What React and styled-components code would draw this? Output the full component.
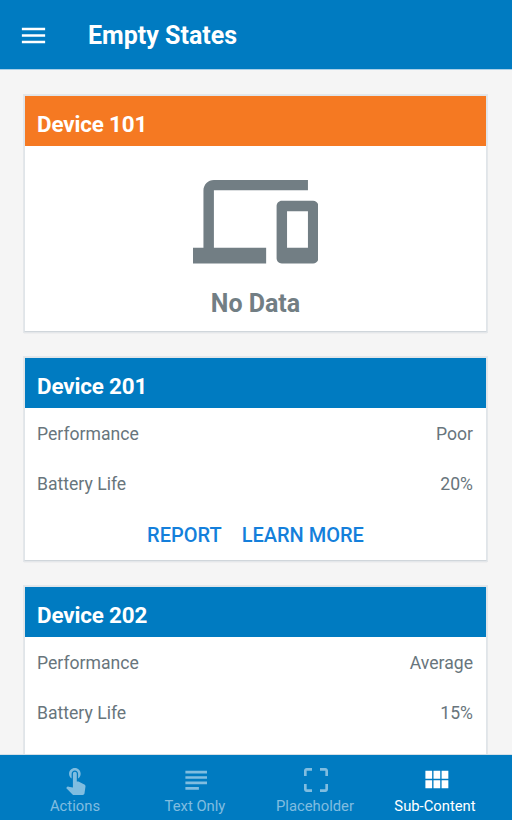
import React from 'react';
import styled, { createGlobalStyle } from 'styled-components';

const GlobalStyle = createGlobalStyle`
  * { box-sizing: border-box; }
  html, body { margin: 0; overflow: hidden; }
  body { font-family: Roboto, "Liberation Sans", sans-serif; background: #f5f5f5; }
`;

const Screen = styled.div`
  width: 512px;
  height: 820px;
  display: flex;
  flex-direction: column;
  overflow: hidden;
  background: #f5f5f5;
`;

const AppBar = styled.header`
  height: 69px;
  flex: none;
  display: flex;
  align-items: center;
  padding: 1px 18px 0;
  background: #007bc1;
  color: #fff;
  box-shadow: 0 1px 0 #a9d0e8;
`;

const MenuButton = styled.button`
  display: flex;
  padding: 0;
  margin-right: 39px;
  border: 0;
  background: none;
  color: inherit;
`;

const Title = styled.h1`
  margin: 0;
  padding-top: 1px;
  font-size: 25px;
  line-height: 30px;
  font-weight: 700;
`;

const Content = styled.main`
  flex: 1;
  min-height: 0;
  display: flex;
  flex-direction: column;
  gap: 25px;
  padding: 26px 25px 0 24px;
  overflow: hidden;
`;

const Card = styled.section`
  flex: none;
  height: ${(p) => p.$height}px;
  border: 1px solid #e0e5e9;
  border-bottom-color: #d0d6db;
  box-shadow: 0 0 0 1px #e4e7ea, 0 1px 1px #cdd0d3;
  background: #fff;
`;

const CardHeader = styled.h2`
  height: 50px;
  margin: 0;
  padding: 4px 12px 0;
  line-height: 49px;
  font-size: 22.4px;
  letter-spacing: -0.15px;
  font-weight: 700;
  color: #fff;
  background: ${(p) => p.$color};
`;

const InfoRow = styled.div`
  height: 50px;
  display: flex;
  align-items: center;
  justify-content: space-between;
  padding: 1px 13px 0 12px;
  font-size: 17.6px;
  color: #68757c;
`;

const CardActions = styled.div`
  display: flex;
  justify-content: center;
  gap: 20px;
  padding-top: 13px;
`;

const ActionButton = styled.button`
  padding: 0;
  border: 0;
  background: none;
  font: 500 20px/28px Roboto, sans-serif;
  color: #147fdb;
`;

const EmptyState = styled.div`
  display: flex;
  flex-direction: column;
  align-items: center;
  padding-top: 13px;
  color: #727e84;
`;

const EmptyLabel = styled.p`
  margin: 5px 0 0;
  font-size: 25px;
  line-height: 30px;
  font-weight: 700;
`;

const TabBar = styled.nav`
  flex: none;
  height: 65px;
  display: flex;
  padding: 9px 17px 0 15px;
  background: #007bc1;
  box-shadow: 0 -1px 0 #d5e0e7;
  z-index: 1;
`;

const Tab = styled.button`
  width: 120px;
  display: flex;
  flex-direction: column;
  align-items: center;
  padding: 0;
  border: 0;
  background: none;
  font: 400 14.8px/20px Roboto, sans-serif;
  color: ${(p) => (p.$active ? '#fff' : '#80bde0')};
`;

const IconSlot = styled.span`
  height: 32px;
  display: flex;
  justify-content: center;
  padding-left: ${(p) => p.$shift}px;
`;

const Glyph = styled.svg`
  display: block;
  flex: none;
  fill: currentColor;
`;

const paths = {
  menu: 'M3 18h18v-2H3v2zm0-5h18v-2H3v2zm0-7v2h18V6H3z',
  devices:
    'M4 6h18V4H4c-1.1 0-2 .9-2 2v11H0v3h14v-3H4V6zm19 2h-6c-.55 0-1 .45-1 1v10c0 .55.45 1 1 1h6c.55 0 1-.45 1-1V9c0-.55-.45-1-1-1zm-1 9h-4v-7h4v7z',
  touch:
    'M9 11.24V7.5C9 6.12 10.12 5 11.5 5S14 6.12 14 7.5v3.74c1.21-.81 2-2.18 2-3.74C16 5.01 13.99 3 11.5 3S7 5.01 7 7.5c0 1.56.79 2.93 2 3.74zm9.84 4.63l-4.54-2.26c-.17-.07-.35-.11-.54-.11H13v-6c0-.83-.67-1.5-1.5-1.5S10 6.67 10 7.5v10.74l-3.43-.72c-.08-.01-.15-.03-.24-.03-.31 0-.59.13-.79.33l-.79.8 4.94 4.94c.27.27.65.44 1.06.44h6.79c.75 0 1.33-.55 1.44-1.28l.75-5.27c.01-.07.02-.14.02-.2 0-.62-.38-1.16-.91-1.38z',
  subject: 'M14 17H4v2h10v-2zm6-8H4v2h16V9zM4 15h16v-2H4v2zM4 5v2h16V5H4z',
  frame:
    'M3 5v4h2V5h4V3H5c-1.1 0-2 .9-2 2zm2 10H3v4c0 1.1.9 2 2 2h4v-2H5v-4zm14 4h-4v2h4c1.1 0 2-.9 2-2v-4h-2v4zm0-16h-4v2h4v4h2V5c0-1.1-.9-2-2-2z',
  module:
    'M4 11h5V5H4v6zm0 7h5v-6H4v6zm6 0h5v-6h-5v6zm6 0h5v-6h-5v6zm-6-7h5V5h-5v6zm6-6v6h5V5h-5z',
};

function Icon({ name, size }) {
  return (
    <Glyph width={size} height={size} viewBox="0 0 24 24" aria-hidden="true">
      <path d={paths[name]} />
    </Glyph>
  );
}

function DeviceCard({ name, performance, battery, height, actions = [] }) {
  return (
    <Card $height={height}>
      <CardHeader $color="#007bc1">{name}</CardHeader>
      <InfoRow><span>Performance</span><span>{performance}</span></InfoRow>
      <InfoRow><span>Battery Life</span><span>{battery}</span></InfoRow>
      <CardActions>
        {actions.map((a) => <ActionButton key={a}>{a}</ActionButton>)}
      </CardActions>
    </Card>
  );
}

const tabs = [
  { label: 'Actions', icon: 'touch', size: 31, shift: 1 },
  { label: 'Text Only', icon: 'subject', size: 32.4, shift: 2 },
  { label: 'Placeholder', icon: 'frame', size: 32, shift: 1 },
  { label: 'Sub-Content', icon: 'module', size: 32.4, shift: 2 , active: true },
];

export default function App() {
  return (
    <>
      <GlobalStyle />
      <Screen>
        <AppBar>
          <MenuButton aria-label="Menu"><Icon name="menu" size={31} /></MenuButton>
          <Title>Empty States</Title>
        </AppBar>
        <Content>
          <Card $height={237}>
            <CardHeader $color="#f57922">Device 101</CardHeader>
            <EmptyState>
              <Icon name="devices" size={125.4} />
              <EmptyLabel>No Data</EmptyLabel>
            </EmptyState>
          </Card>
          <DeviceCard name="Device 201" performance="Poor" battery="20%" height={204} actions={['REPORT', 'LEARN MORE']} />
          <DeviceCard name="Device 202" performance="Average" battery="15%" height={204} />
        </Content>
        <TabBar>
          {tabs.map((t) => (
            <Tab key={t.label} $active={t.active}>
              <IconSlot $shift={t.shift}><Icon name={t.icon} size={t.size} /></IconSlot>
              {t.label}
            </Tab>
          ))}
        </TabBar>
      </Screen>
    </>
  );
}
